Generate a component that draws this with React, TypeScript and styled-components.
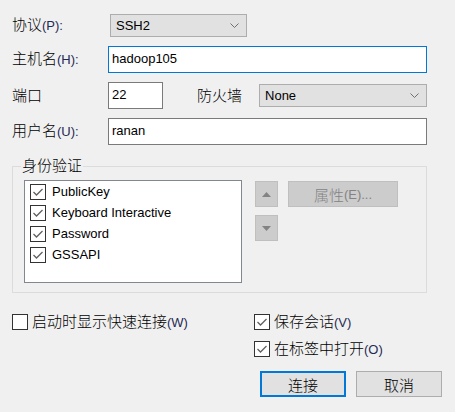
import styled, { createGlobalStyle } from "styled-components";

const GlobalStyle = createGlobalStyle`
  html, body {
    margin: 0;
    padding: 0;
    background: #f0f0f0;
  }
  body {
    font-family: "Liberation Sans", "Noto Sans CJK SC", sans-serif;
    color: #000;
  }
  * {
    box-sizing: border-box;
  }
`;

function Chevron() {
  return (
    <svg width="9" height="5" viewBox="0 0 9 5">
      <polyline points="0.5,0.5 4.5,4.5 8.5,0.5" fill="none" stroke="#707070" strokeWidth="1" />
    </svg>
  );
}

function Check({ checked }: { checked: boolean }) {
  return (
    <CheckBox>
      {checked && (
        <svg width="14" height="14" viewBox="0 0 14 14">
          <polyline points="2.5,7 5.5,10 11.5,4" fill="none" stroke="#606060" strokeWidth="1.3" />
        </svg>
      )}
    </CheckBox>
  );
}

const authItems = ["PublicKey", "Keyboard Interactive", "Password", "GSSAPI"];

export default function App() {
  return (
    <>
      <GlobalStyle />
      <Dialog>
        <Row $h={23}>
          <Label>
            协议<Accel>(P):</Accel>
          </Label>
          <Select $w={137} style={{ marginLeft: 2 }}>
            <span>SSH2</span>
            <Chevron />
          </Select>
        </Row>
        <Row $h={27}>
          <Label>
            主机名<Accel>(H):</Accel>
          </Label>
          <TextBox $w={319} $focus>
            hadoop105
          </TextBox>
        </Row>
        <Row $h={27}>
          <Label>端口</Label>
          <TextBox $w={55}>22</TextBox>
          <InlineLabel>防火墙</InlineLabel>
          <Select $w={168}>
            <span>None</span>
            <Chevron />
          </Select>
        </Row>
        <Row $h={27}>
          <Label>
            用户名<Accel>(U):</Accel>
          </Label>
          <TextBox $w={319}>ranan</TextBox>
        </Row>

        <Group>
          <Legend>身份验证</Legend>
          <GroupBody>
            <ListBox>
              {authItems.map((item) => (
                <ListItem key={item}>
                  <Check checked />
                  <span>{item}</span>
                </ListItem>
              ))}
            </ListBox>
            <ArrowCol>
              <ArrowBtn>
                <svg width="9" height="5" viewBox="0 0 9 5">
                  <polygon points="0,5 4.5,0 9,5" fill="#838383" />
                </svg>
              </ArrowBtn>
              <ArrowBtn>
                <svg width="9" height="5" viewBox="0 0 9 5">
                  <polygon points="0,0 9,0 4.5,5" fill="#838383" />
                </svg>
              </ArrowBtn>
            </ArrowCol>
            <PropBtn>
              属性<Accel $muted>(E)...</Accel>
            </PropBtn>
          </GroupBody>
        </Group>

        <Bottom>
          <CheckLine>
            <Check checked={false} />
            <span>
              启动时显示快速连接<Accel>(W)</Accel>
            </span>
          </CheckLine>
          <RightChecks>
            <CheckLine>
              <Check checked />
              <span>
                保存会话<Accel>(V)</Accel>
              </span>
            </CheckLine>
            <CheckLine>
              <Check checked />
              <span>
                在标签中打开<Accel>(O)</Accel>
              </span>
            </CheckLine>
          </RightChecks>
        </Bottom>

        <ButtonRow>
          <DlgButton $default>连接</DlgButton>
          <DlgButton>取消</DlgButton>
        </ButtonRow>
      </Dialog>
    </>
  );
}

const Dialog = styled.div`
  display: flex;
  flex-direction: column;
  width: 455px;
  height: 412px;
  padding: 14px 0 0 12px;
  background: #f0f0f0;
  overflow: hidden;
`;

const Row = styled.div<{ $h: number }>`
  display: flex;
  align-items: center;
  height: ${(p) => p.$h}px;
  margin-top: 9px;

  &:first-child {
    margin-top: 0;
  }
`;

const Label = styled.div`
  width: 96px;
  flex-shrink: 0;
  font-size: 15px;
  font-weight: 300;
  line-height: 20px;
`;

const InlineLabel = styled.div`
  margin: 0 17px 0 34px;
  font-size: 15px;
  font-weight: 300;
  line-height: 20px;
`;

const Accel = styled.span<{ $muted?: boolean }>`
  font-size: 13px;
  font-weight: 400;
  color: ${(p) => (p.$muted ? "#838383" : "#1f2a55")};
`;

const Select = styled.div<{ $w: number }>`
  display: flex;
  align-items: center;
  justify-content: space-between;
  width: ${(p) => p.$w}px;
  height: 23px;
  padding: 0 7px 1px 5px;
  border: 1px solid #adadad;
  background: #e1e1e1;
  font-size: 13px;
`;

const TextBox = styled.div<{ $w: number; $focus?: boolean }>`
  display: flex;
  align-items: center;
  width: ${(p) => p.$w}px;
  height: 27px;
  padding: 0 3px 3px;
  border: 1px solid ${(p) => (p.$focus ? "#0078d7" : "#7a7a7a")};
  background: #fff;
  font-size: 13px;
`;

const Group = styled.fieldset`
  width: 415px;
  min-width: 0;
  margin: 13px 0 0 0;
  padding: 0;
  border: 1px solid #dcdcdc;
`;

const Legend = styled.legend`
  margin-left: 8px;
  padding: 0 1px;
  font-size: 15px;
  font-weight: 300;
  line-height: 16px;
`;

const GroupBody = styled.div`
  display: flex;
  align-items: flex-start;
  padding: 6px 0 9px 11px;
`;

const ListBox = styled.div`
  width: 218px;
  height: 103px;
  padding: 0 5px;
  border: 1px solid #828790;
  background: #fff;
`;

const ListItem = styled.div`
  display: flex;
  align-items: center;
  gap: 6px;
  height: 21px;
  font-size: 13px;
`;

const CheckBox = styled.span`
  display: flex;
  align-items: center;
  justify-content: center;
  flex-shrink: 0;
  width: 16px;
  height: 16px;
  border: 1px solid #333;
  background: #fff;
`;

const ArrowCol = styled.div`
  display: flex;
  flex-direction: column;
  gap: 8px;
  margin: 1px 0 0 13px;
`;

const ArrowBtn = styled.div`
  display: flex;
  align-items: center;
  justify-content: center;
  width: 23px;
  height: 26px;
  border: 1px solid #bfbfbf;
  background: #cccccc;
`;

const PropBtn = styled.div`
  display: flex;
  align-items: center;
  justify-content: center;
  width: 110px;
  height: 26px;
  margin: 1px 0 0 10px;
  border: 1px solid #bfbfbf;
  background: #cccccc;
  color: #838383;
  font-size: 15px;
  font-weight: 300;
`;

const Bottom = styled.div`
  display: grid;
  grid-template-columns: 242px 1fr;
  align-items: start;
  margin-top: 21px;
`;

const RightChecks = styled.div`
  display: flex;
  flex-direction: column;
  gap: 11px;
`;

const CheckLine = styled.div`
  display: flex;
  align-items: center;
  gap: 4px;
  height: 16px;
  font-size: 15px;
  font-weight: 300;
  line-height: 20px;
`;

const ButtonRow = styled.div`
  display: flex;
  justify-content: flex-end;
  gap: 10px;
  padding-right: 13px;
  margin-top: 14px;
`;

const DlgButton = styled.div<{ $default?: boolean }>`
  display: flex;
  align-items: center;
  justify-content: center;
  width: 86px;
  height: 26px;
  border: ${(p) => (p.$default ? "2px solid #0078d7" : "1px solid #adadad")};
  background: #e1e1e1;
  font-size: 15px;
  font-weight: 300;
`;
